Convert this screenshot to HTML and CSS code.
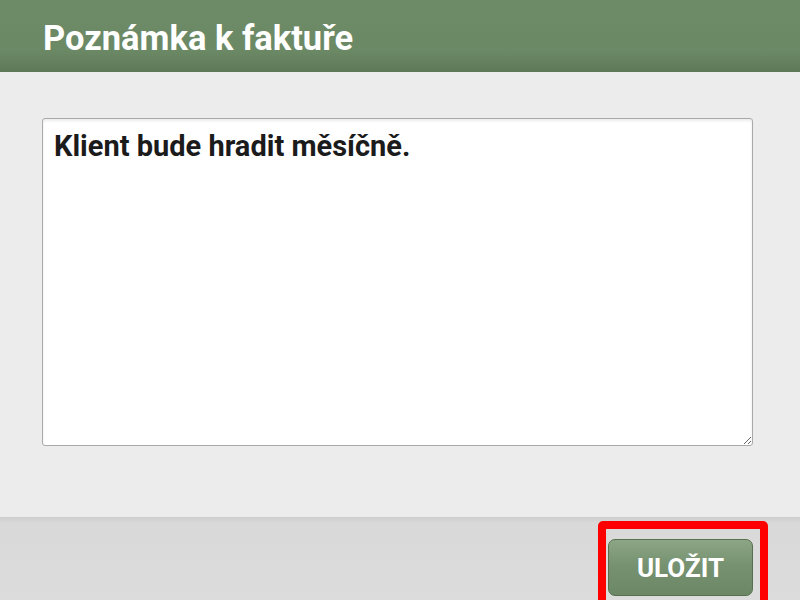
FILE: index.html
```html
<!DOCTYPE html>
<html lang="cs">
<head>
<meta charset="utf-8">
<title>Poznámka k faktuře</title>
<link rel="stylesheet" href="styles.css">
</head>
<body>
<div class="dialog">
  <header class="dialog-header">
    <h1 class="dialog-title">Poznámka k faktuře</h1>
  </header>
  <main class="dialog-body">
    <textarea class="note">Klient bude hradit měsíčně.</textarea>
  </main>
  <footer class="dialog-footer">
    <div class="highlight">
      <button class="btn-save" type="button">ULOŽIT</button>
    </div>
  </footer>
</div>
</body>
</html>
```

FILE: styles.css
```css
html, body {
  margin: 0;
  padding: 0;
  width: 800px;
  height: 600px;
  overflow: hidden;
  font-family: Roboto, "DejaVu Sans", sans-serif;
}

.dialog {
  display: flex;
  flex-direction: column;
  width: 800px;
  height: 600px;
  overflow: hidden;
  background: #ececec;
}

.dialog-header {
  flex: 0 0 72px;
  height: 72px;
  box-sizing: border-box;
  padding: 4px 0 0 43px;
  display: flex;
  align-items: center;
  background: linear-gradient(to bottom, #6e8b68 0%, #6c8966 70%, #5d7857 100%);
}

.dialog-title {
  margin: 0;
  font-size: 34.5px;
  font-weight: 700;
  color: #ffffff;
  line-height: 1;
}

.dialog-body {
  flex: 0 0 445px;
  height: 445px;
  box-sizing: border-box;
  padding: 46px 47px 0 42px;
}

.note {
  display: block;
  width: 711px;
  height: 328px;
  box-sizing: border-box;
  margin: 0;
  padding: 10px 10px 10px 11px;
  border: 1px solid #a9a9a9;
  border-radius: 3px;
  background: #ffffff;
  box-shadow: inset 0 2px 3px rgba(0, 0, 0, 0.08);
  font-family: Roboto, "DejaVu Sans", sans-serif;
  font-size: 29px;
  font-weight: 700;
  line-height: 1.2;
  color: #1b1b1b;
  resize: both;
  outline: none;
}

.dialog-footer {
  flex: 1 1 auto;
  min-height: 0;
  overflow: hidden;
  display: flex;
  justify-content: flex-end;
  align-items: flex-start;
  padding: 4px 32px 0 0;
  background: linear-gradient(to bottom, #cdcdcd 0px, #d9d9d9 6px, #dcdcdc 100%);
}

.highlight {
  flex: 0 0 auto;
  border: 8px solid #ff0000;
  border-radius: 5px;
  padding: 10px 7px 20px 2px;
}

.btn-save {
  display: block;
  width: 145px;
  height: 57px;
  box-sizing: border-box;
  border: 1px solid #58704f;
  border-radius: 7px;
  background: linear-gradient(to bottom, #8da686 0%, #769270 45%, #6b8765 100%);
  color: #ffffff;
  font-family: Roboto, "DejaVu Sans", sans-serif;
  font-size: 26px;
  font-weight: 700;
  padding: 0;
  cursor: pointer;
}
```
